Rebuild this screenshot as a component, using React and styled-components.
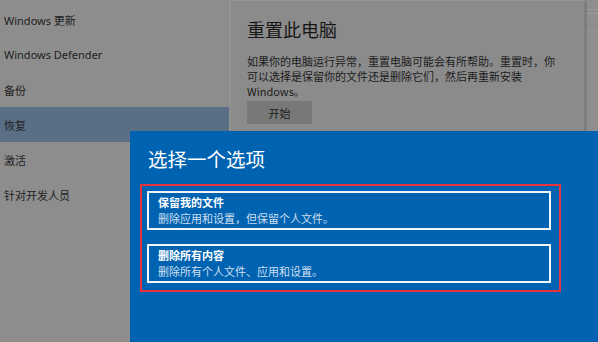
import React from 'react'
import styled, { createGlobalStyle } from 'styled-components'

// Settings page dimmed behind the reset dialog

const Global = createGlobalStyle`
  html, body { margin: 0; padding: 0; }
  body {
    font-family: "Noto Sans", "Noto Sans CJK SC", sans-serif;
    overflow: hidden;
  }
`

const Screen = styled.div`
  position: relative;
  width: 598px;
  height: 342px;
  display: flex;
  background: #8b8b8b;
  overflow: hidden;
`

const Sidebar = styled.ul`
  width: 229px;
  margin: 0;
  padding: 2px 0 0;
  list-style: none;
  background: #8d8d8d;
  border-right: 2px solid #939393;
`

const NavItem = styled.li`
  height: 35px;
  display: flex;
  align-items: center;
  padding-left: 4px;
  font-size: 11px;
  color: #1e1e1e;
  background: ${p => (p.active ? '#5a6f85' : 'transparent')};
`

const Content = styled.div`
  flex: 1;
  padding: 16px 0 0 16px;
  border-right: 3px solid #7e7e7e;
  border-top: 1px solid #979797;
`

const Heading = styled.h2`
  margin: 0;
  font-family: "Noto Sans CJK SC", sans-serif;
  font-size: 18px;
  font-weight: 400;
  line-height: 24px;
  color: #161616;
`

const Para = styled.p`
  margin: 13px 0 0;
  width: 312px;
  font-family: "Noto Sans CJK SC", sans-serif;
  font-size: 11px;
  line-height: 15px;
  color: #1c1c1c;
`

const StartButton = styled.button`
  display: block;
  margin-top: 2px;
  width: 65px;
  height: 23px;
  border: none;
  background: #787878;
  font-family: "Noto Sans CJK SC", sans-serif;
  font-size: 11px;
  color: #1c1c1c;
`

const Scroll = styled.div`
  width: 11px;
  background: #8e8e8e;
  background-image: linear-gradient(#8e8e8e 9px, #9a9a9a 9px, #9a9a9a 10px, #8e8e8e 10px, #8e8e8e 13px, #999 13px, #999 14px, #8e8e8e 14px, #8e8e8e 30px, #999 30px, #999 31px, #8e8e8e 31px);
`

const Dialog = styled.div`
  position: absolute;
  left: 130px;
  top: 131px;
  right: 0;
  bottom: 0;
  background: #0063b1;
  padding: 16px 0 0 10px;
`

const DialogTitle = styled.h1`
  margin: 0 0 0 8px;
  font-family: "Noto Sans CJK SC", sans-serif;
  font-size: 19.5px;
  font-weight: 400;
  line-height: 24px;
  color: #fff;
`

const Highlight = styled.div`
  margin-top: 13px;
  width: 404px;
  padding: 5px 8px 7px 5px;
  border: 2px solid #e8333c;
  display: flex;
  flex-direction: column;
  gap: 14px;
`

const Option = styled.div`
  height: 34px;
  border: 2px solid #f2f6fb;
  padding: 1px 9px 0;
  display: flex;
  flex-direction: column;
  justify-content: center;
  font-family: "Noto Sans CJK SC", sans-serif;
`

const OptionTitle = styled.div`
  font-size: 11px;
  font-weight: 700;
  line-height: 15px;
  color: #fff;
`

const OptionDesc = styled.div`
  font-size: 11px;
  line-height: 17px;
  color: #cfdff0;
`

const options = [
  { title: '保留我的文件', desc: '删除应用和设置，但保留个人文件。' },
  { title: '删除所有内容', desc: '删除所有个人文件、应用和设置。' },
]

const nav = ['Windows 更新', 'Windows Defender', '备份', '恢复', '激活', '针对开发人员']

export default function App() {
  return (
    <Screen>
      <Global />
      <Sidebar>
        {nav.map(n => (
          <NavItem key={n} active={n === '恢复'}>{n}</NavItem>
        ))}
      </Sidebar>
      <Content>
        <Heading>重置此电脑</Heading>
        <Para>
          如果你的电脑运行异常，重置电脑可能会有所帮助。重置时，你可以选择是保留你的文件还是删除它们，然后再重新安装 Windows。
        </Para>
        <StartButton>开始</StartButton>
      </Content>
      <Scroll />
      <Dialog>
        <DialogTitle>选择一个选项</DialogTitle>
        <Highlight>
          {options.map(o => (
            <Option key={o.title}>
              <OptionTitle>{o.title}</OptionTitle>
              <OptionDesc>{o.desc}</OptionDesc>
            </Option>
          ))}
        </Highlight>
      </Dialog>
    </Screen>
  )
}
